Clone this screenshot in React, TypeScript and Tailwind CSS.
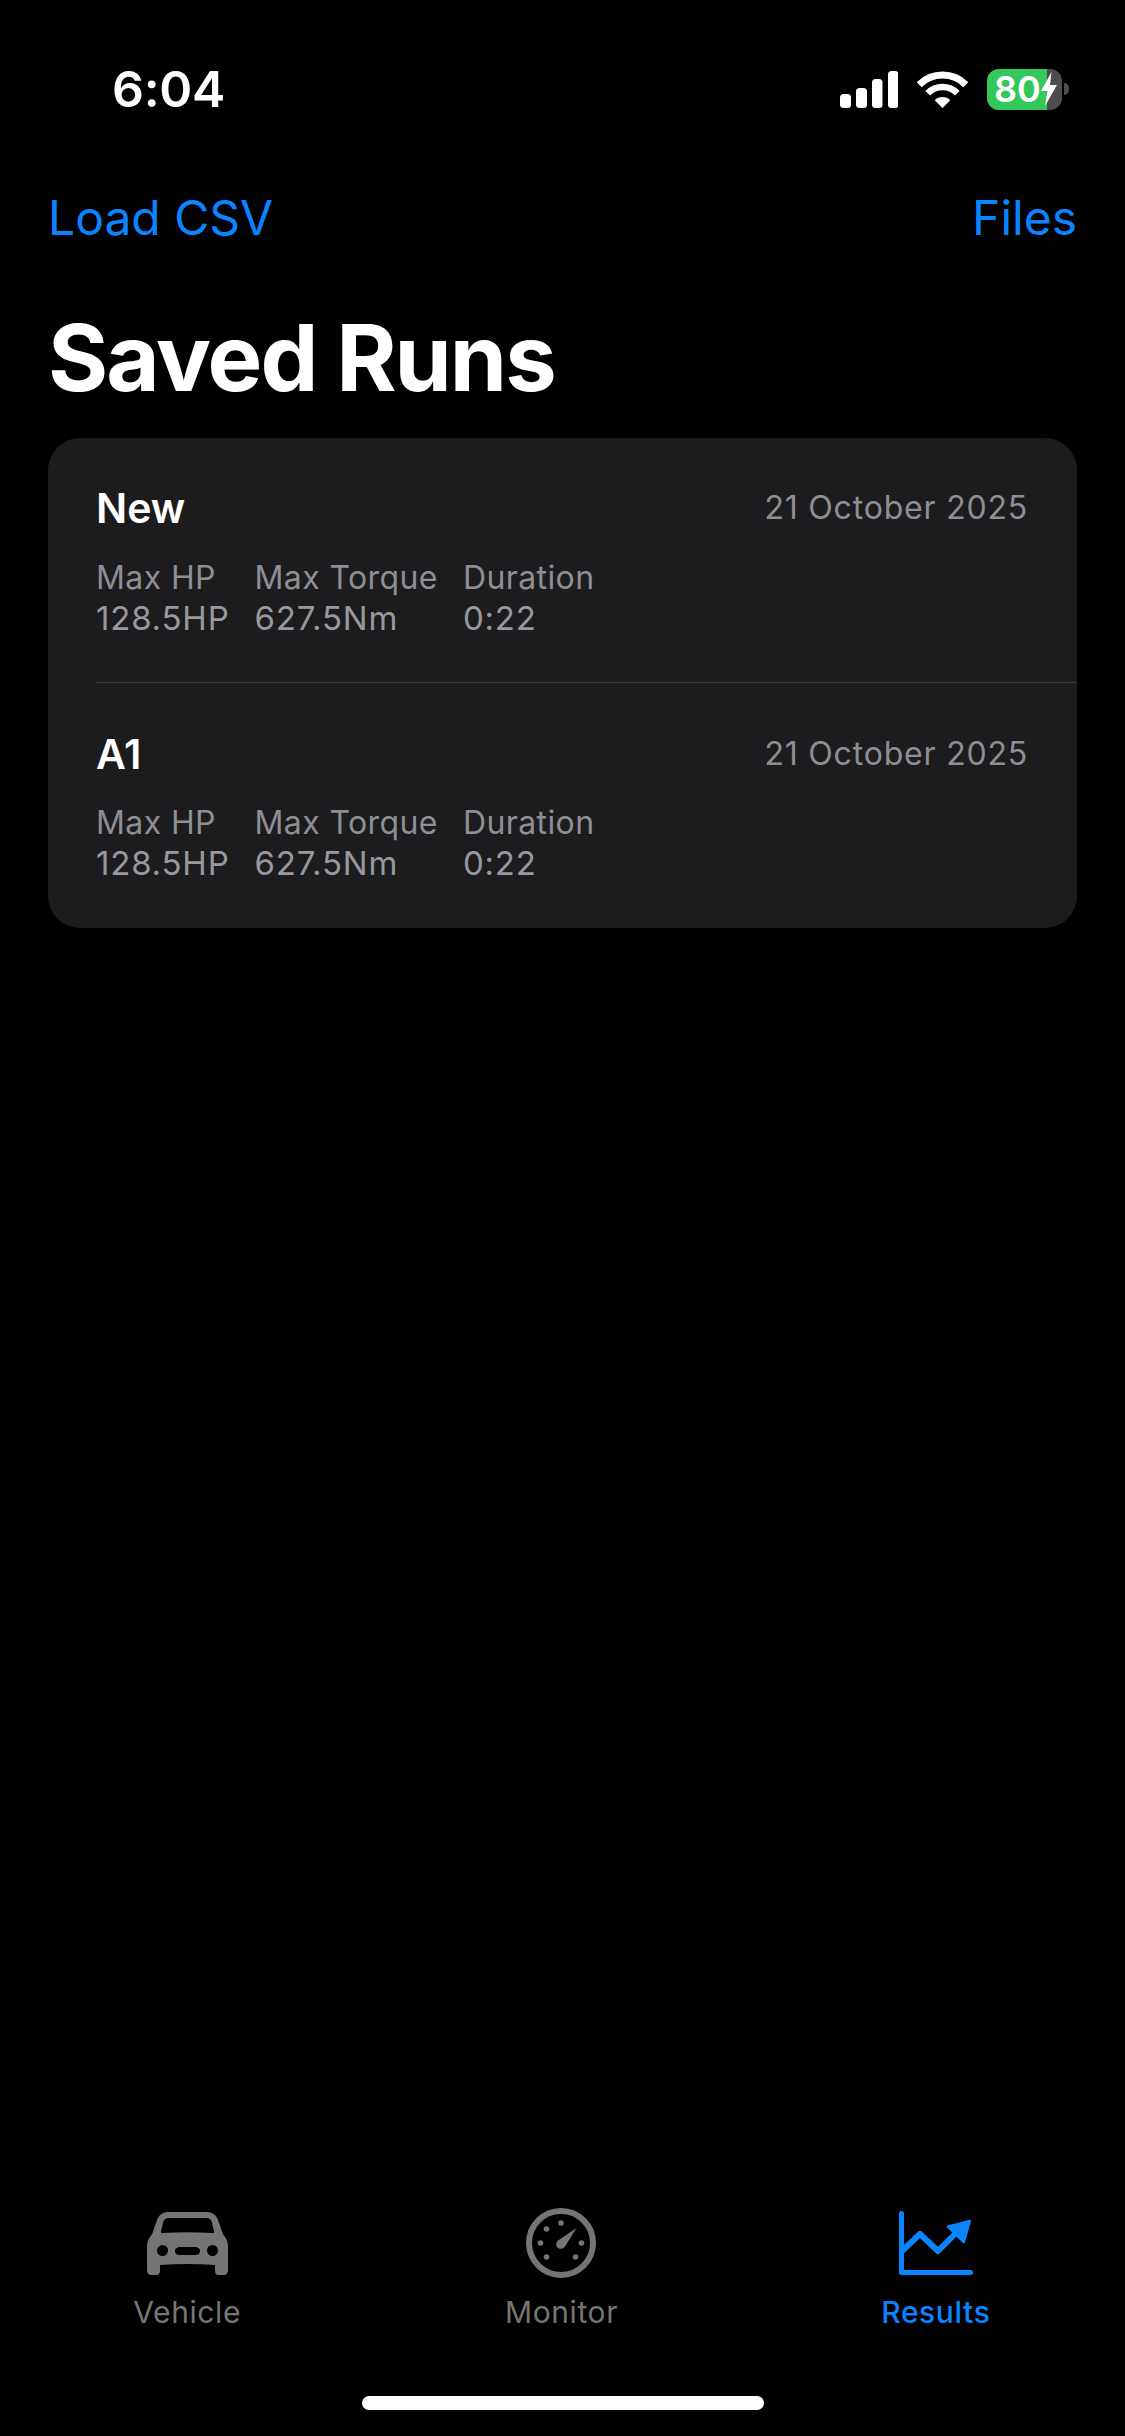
const font = "font-['Inter','Noto_Sans',sans-serif]";

function Signal() {
  return (
    <svg width="58" height="37" viewBox="0 0 58 37" fill="#fff">
      <rect x="0" y="23" width="11" height="14" rx="3.5" />
      <rect x="16" y="17" width="11" height="20" rx="3.5" />
      <rect x="32" y="8" width="10.5" height="29" rx="3.5" />
      <rect x="48" y="0" width="10.5" height="37" rx="3.5" />
    </svg>
  );
}

function Wifi() {
  return (
    <svg width="51" height="37" viewBox="0 0 51 37" fill="none" stroke="#fff">
      <path d="M2.2 13.7A33 33 0 0 1 48.8 13.7" strokeWidth="7" />
      <path d="M10.7 22.2A21 21 0 0 1 40.3 22.2" strokeWidth="6.5" />
      <path d="M25.5 37L17.7 29.2A11 11 0 0 1 33.3 29.2Z" fill="#fff" stroke="none" />
    </svg>
  );
}

function Battery() {
  return (
    <div className="flex items-center gap-[2px]">
      <div className="relative flex h-[41px] w-[75px] overflow-hidden rounded-[12px] bg-[#4d4d4f]">
        <div className="h-full w-[60px] bg-[#34c759]" />
        <div className="absolute inset-0 flex items-center pl-[7px]">
          <span className="text-[36px] leading-none font-semibold text-white">80</span>
          <svg width="16" height="34" viewBox="0 0 16 34" fill="#fff" className="shrink-0">
            <path d="M10.5 0L0 19H6.5L4 34L16 13H9L10.5 0Z" />
          </svg>
        </div>
      </div>
      <div className="h-[12px] w-[5px] rounded-r-full bg-[#4d4d4f]" />
    </div>
  );
}

function Car() {
  return (
    <svg width="81" height="63" viewBox="0 0 81 63" fill="#757575">
      <path
        fillRule="evenodd"
        d="M22 0H59C65 0 69 2.5 71 8L75.5 21C76.5 23.5 78 24.5 79 26.5C80.5 29 81 31.5 81 35V58C81 61 79.5 63 76.5 63H72C69 63 68 61 68 58V53C50 51.5 31 51.5 13 53V58C13 61 12 63 9 63H4.5C1.5 63 0 61 0 58V35C0 31.5 0.5 29 2 26.5C3 24.5 4.5 23.5 5.5 21L10 8C12 2.5 16 0 22 0ZM21.5 6C18.5 6 17 7.5 16 10.5L14 19.5C13.7 20.7 14.3 21.2 15.5 21.1C32 19.8 49 19.8 65.5 21.1C66.7 21.2 67.3 20.7 67 19.5L65 10.5C64 7.5 62.5 6 59.5 6H21.5ZM15.5 33A5.5 5.5 0 1 0 15.5 44A5.5 5.5 0 1 0 15.5 33ZM65.5 33A5.5 5.5 0 1 0 65.5 44A5.5 5.5 0 1 0 65.5 33ZM33 35C30.5 35 28 36 28 39C28 42 30.5 43 33 43H48C50.5 43 53 42 53 39C53 36 50.5 35 48 35H33Z"
      />
    </svg>
  );
}

function Gauge() {
  return (
    <svg width="70" height="70" viewBox="0 0 70 70" fill="#757575">
      <circle cx="35" cy="35" r="32" fill="none" stroke="#757575" strokeWidth="6" />
      <circle cx="35" cy="15" r="2.8" />
      <circle cx="20.5" cy="21" r="2.8" />
      <circle cx="14.5" cy="35" r="2.8" />
      <circle cx="20.5" cy="49" r="2.8" />
      <circle cx="49.5" cy="49" r="2.8" />
      <circle cx="55.5" cy="35" r="2.8" />
      <path d="M50.5 20L39 38.5C37 41.3 33.5 41.6 31.5 39.5C29.5 37.5 30 34 32.5 32.2Z" />
    </svg>
  );
}

function Chart() {
  return (
    <svg width="74" height="64" viewBox="0 0 74 64" fill="none" stroke="#0a84ff">
      <path d="M2.5 2.5V61.5H71.5" strokeWidth="5" strokeLinecap="round" strokeLinejoin="round" />
      <path d="M3 40L21 23L39 40L60 19" strokeWidth="6" strokeLinejoin="round" />
      <path d="M48.5 14.5L70.5 8.8C71.5 8.6 72.2 9.3 72 10.3L66 31.5C65.7 32.6 64.7 32.8 63.9 32L48 16.5C47.4 15.8 47.6 14.8 48.5 14.5Z" fill="#0a84ff" stroke="none" />
    </svg>
  );
}

function Stat({ label, value }: { label: string; value: string }) {
  return (
    <div className="flex flex-col">
      <span className="h-[40px] text-[32px] leading-[40px] tracking-[0.4px] text-[#8e8e93]">{label}</span>
      <span className="h-[40px] text-[33px] leading-[40px] tracking-[0.8px] text-[#98989d]">{value}</span>
    </div>
  );
}

function RunRow({ name, divided }: { name: string; divided?: boolean }) {
  return (
    <div className={divided ? "ml-[48px] h-[245px] border-b border-[#38383c] pt-[47px]" : "ml-[48px] pt-[48px]"}>
      <div className="flex items-center justify-between pr-[49px]">
        <span className="text-[41px] leading-[46px] font-semibold text-white">{name}</span>
        <span className="text-[32px] leading-[46px] tracking-[0.8px] text-[#8e8e93]">21 October 2025</span>
      </div>
      <div className={divided ? "mt-[27px] flex gap-[25px]" : "mt-[26px] flex gap-[25px]"}>
        <Stat label="Max HP" value="128.5HP" />
        <Stat label="Max Torque" value="627.5Nm" />
        <Stat label="Duration" value="0:22" />
      </div>
    </div>
  );
}

function Tab({ icon, label, active }: { icon: React.ReactNode; label: string; active?: boolean }) {
  return (
    <div className="flex flex-col items-center">
      <div className="flex h-[70px] items-center">{icon}</div>
      <span className={active ? "mt-[16px] text-[30px] leading-[36px] font-medium tracking-[0.6px] text-[#0a84ff]" : "mt-[16px] text-[30px] leading-[36px] tracking-[0.6px] text-[#757575]"}>
        {label}
      </span>
    </div>
  );
}

export default function App() {
  return (
    <div className={`${font} flex h-[2436px] w-[1125px] flex-col overflow-hidden bg-black`}>
      <div className="mt-[55px] flex h-[68px] shrink-0 items-center justify-between pr-[56px] pl-[112px]">
        <span className="text-[50px] leading-none font-semibold tracking-[-0.3px] text-white">6:04</span>
        <div className="flex items-center gap-[19px]">
          <Signal />
          <Wifi />
          <Battery />
        </div>
      </div>
      <div className="mt-[64px] flex items-center justify-between px-[48px]">
        <span className="text-[48px] leading-[62px] text-[#0a84ff]">Load CSV</span>
        <span className="text-[48px] leading-[62px] text-[#0a84ff]">Files</span>
      </div>
      <h1 className="mt-[55px] pl-[48px] text-[92px] leading-[108px] font-bold tracking-[-2px] text-white">Saved Runs</h1>
      <div className="mx-[48px] mt-[26px] h-[490px] overflow-hidden rounded-[32px] bg-[#1c1c1e]">
        <RunRow name="New" divided />
        <RunRow name="A1" />
      </div>
      <div className="flex-1" />
      <div className="mr-[2px] grid grid-cols-3">
        <Tab icon={<Car />} label="Vehicle" />
        <Tab icon={<Gauge />} label="Monitor" />
        <Tab icon={<Chart />} label="Results" active />
      </div>
      <div className="mt-[66px] mb-[26px] flex justify-center">
        <div className="h-[14px] w-[402px] rounded-full bg-white" />
      </div>
    </div>
  );
}
